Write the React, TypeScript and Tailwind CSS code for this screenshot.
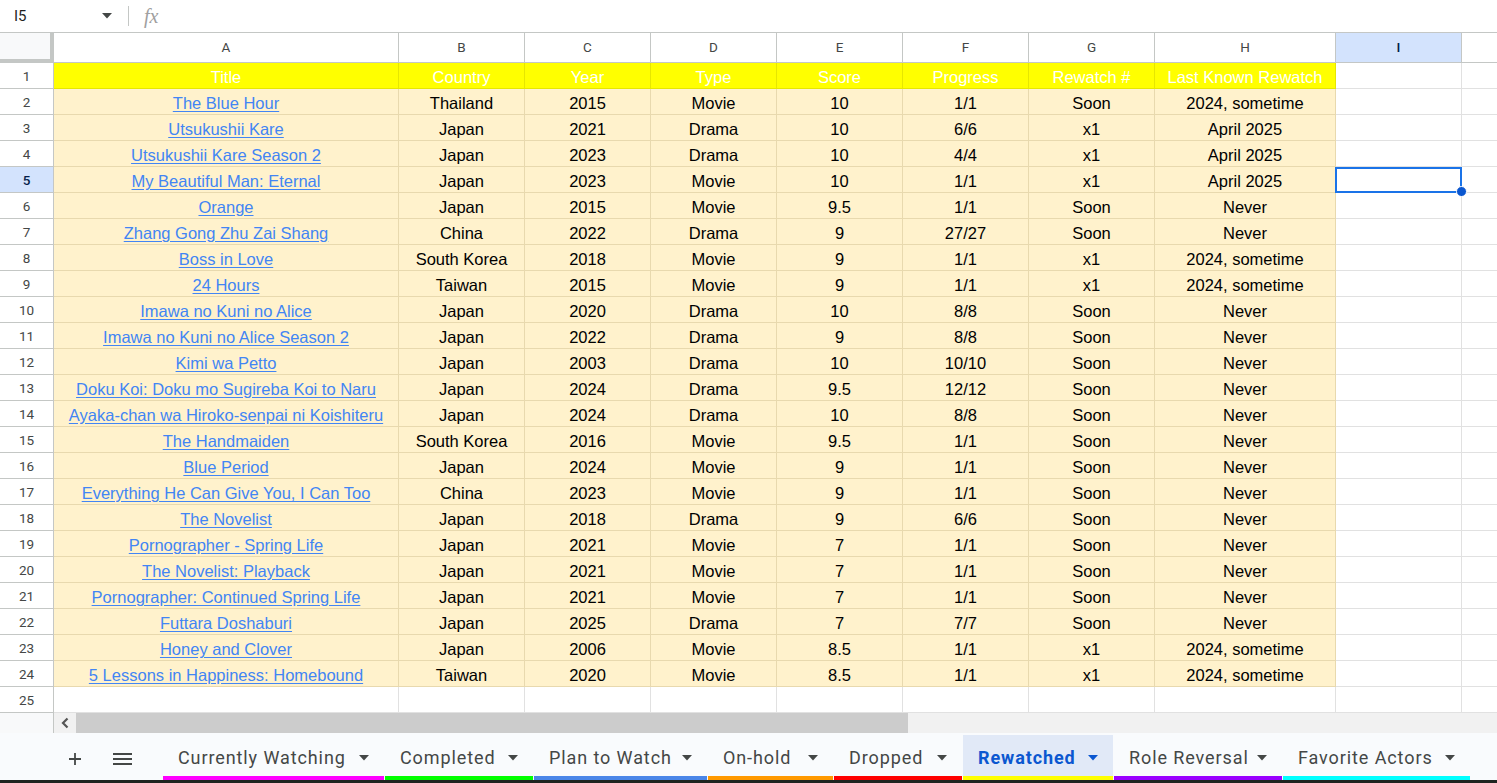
import React from "react";

type Row = [string, string, string, string, string, string, string, string];

const rows: Row[] = [
  ["The Blue Hour", "Thailand", "2015", "Movie", "10", "1/1", "Soon", "2024, sometime"],
  ["Utsukushii Kare", "Japan", "2021", "Drama", "10", "6/6", "x1", "April 2025"],
  ["Utsukushii Kare Season 2", "Japan", "2023", "Drama", "10", "4/4", "x1", "April 2025"],
  ["My Beautiful Man: Eternal", "Japan", "2023", "Movie", "10", "1/1", "x1", "April 2025"],
  ["Orange", "Japan", "2015", "Movie", "9.5", "1/1", "Soon", "Never"],
  ["Zhang Gong Zhu Zai Shang", "China", "2022", "Drama", "9", "27/27", "Soon", "Never"],
  ["Boss in Love", "South Korea", "2018", "Movie", "9", "1/1", "x1", "2024, sometime"],
  ["24 Hours", "Taiwan", "2015", "Movie", "9", "1/1", "x1", "2024, sometime"],
  ["Imawa no Kuni no Alice", "Japan", "2020", "Drama", "10", "8/8", "Soon", "Never"],
  ["Imawa no Kuni no Alice Season 2", "Japan", "2022", "Drama", "9", "8/8", "Soon", "Never"],
  ["Kimi wa Petto", "Japan", "2003", "Drama", "10", "10/10", "Soon", "Never"],
  ["Doku Koi: Doku mo Sugireba Koi to Naru", "Japan", "2024", "Drama", "9.5", "12/12", "Soon", "Never"],
  ["Ayaka-chan wa Hiroko-senpai ni Koishiteru", "Japan", "2024", "Drama", "10", "8/8", "Soon", "Never"],
  ["The Handmaiden", "South Korea", "2016", "Movie", "9.5", "1/1", "Soon", "Never"],
  ["Blue Period", "Japan", "2024", "Movie", "9", "1/1", "Soon", "Never"],
  ["Everything He Can Give You, I Can Too", "China", "2023", "Movie", "9", "1/1", "Soon", "Never"],
  ["The Novelist", "Japan", "2018", "Drama", "9", "6/6", "Soon", "Never"],
  ["Pornographer - Spring Life", "Japan", "2021", "Movie", "7", "1/1", "Soon", "Never"],
  ["The Novelist: Playback", "Japan", "2021", "Movie", "7", "1/1", "Soon", "Never"],
  ["Pornographer: Continued Spring Life", "Japan", "2021", "Movie", "7", "1/1", "Soon", "Never"],
  ["Futtara Doshaburi", "Japan", "2025", "Drama", "7", "7/7", "Soon", "Never"],
  ["Honey and Clover", "Japan", "2006", "Movie", "8.5", "1/1", "x1", "2024, sometime"],
  ["5 Lessons in Happiness: Homebound", "Taiwan", "2020", "Movie", "8.5", "1/1", "x1", "2024, sometime"],
];

const headers = ["Title", "Country", "Year", "Type", "Score", "Progress", "Rewatch #", "Last Known Rewatch"];
const letters = ["A", "B", "C", "D", "E", "F", "G", "H"];
const widths = ["w-[345px]", "w-[126px]", "w-[126px]", "w-[126px]", "w-[126px]", "w-[126px]", "w-[126px]", "w-[181px]"];

const tabs = [
  { name: "Currently Watching", w: "w-[221px]", bar: "bg-[#ff00ff]" },
  { name: "Completed", w: "w-[148px]", bar: "bg-[#00ff00]" },
  { name: "Plan to Watch", w: "w-[173px]", bar: "bg-[#4a86e8]" },
  { name: "On-hold", w: "w-[125px]", bar: "bg-[#ff9900]" },
  { name: "Dropped", w: "w-[128px]", bar: "bg-[#ff0000]" },
  { name: "Rewatched", w: "w-[150px]", bar: "bg-[#ffff00]", active: true },
  { name: "Role Reversal", w: "w-[168px]", bar: "bg-[#9900ff]" },
  { name: "Favorite Actors", w: "w-[187px]", bar: "bg-[#00ffff]" },
];

const Caret = ({ cls }: { cls: string }) => (
  <svg width="10" height="6" viewBox="0 0 10 6" className={cls}>
    <path d="M0 0h10L5 5.5z" fill="currentColor" />
  </svg>
);

const cellFont = { fontFamily: '"Liberation Sans", Arial, sans-serif' };

export default function App() {
  return (
    <div className="h-[783px] w-full overflow-hidden flex flex-col bg-white" style={{ fontFamily: "Roboto, sans-serif" }}>
      {/* formula bar */}
      <div className="h-[33px] shrink-0 flex items-center border-b border-[#c4c7c5]">
        <div className="w-[128px] flex items-center pl-[14px] pr-[16px] text-[15px] text-[#1f1f1f]">
          <span>I5</span>
          <Caret cls="ml-auto text-[#444746]" />
        </div>
        <div className="w-px h-[20px] bg-[#c4c7c5]" />
        <span className="ml-[15px] text-[20px] italic text-[#a0a0a0]" style={{ fontFamily: '"Liberation Serif", serif' }}>
          fx
        </span>
      </div>

      {/* grid */}
      <div className="flex-1 flex flex-col overflow-hidden">
        {/* column letters */}
        <div className="h-[30px] flex shrink-0 text-[13.5px] text-[#444746]">
          <div className="w-[54px] bg-[#f8f9fa] border-r-4 border-b-4 border-[#c4c7c5]" />
          {letters.map((l, i) => (
            <div key={l} className={`${widths[i]} flex items-center justify-center border-r border-b border-[#c4c7c5]`}>
              {l}
            </div>
          ))}
          <div className="w-[126px] flex items-center justify-center border-r border-b border-[#c4c7c5] bg-[#d3e3fd] text-[#041e49] font-medium">
            I
          </div>
          <div className="flex-1 border-b border-[#c4c7c5]" />
        </div>

        {/* header row */}
        <div className="h-[26px] flex shrink-0" style={cellFont}>
          <div className="w-[54px] flex items-center justify-center pt-[2px] border-r border-b border-[#c4c7c5] text-[13.5px] text-[#444746]" style={{ fontFamily: "Roboto, sans-serif" }}>
            1
          </div>
          {headers.map((h, i) => (
            <div key={h} className={`${widths[i]} flex items-center justify-center pt-[4px] bg-[#ffff00] border-r border-b border-[#e6e600] text-white text-[16.5px]`}>
              {h}
            </div>
          ))}
          <div className="w-[126px] border-r border-b border-[#e1e1e1]" />
          <div className="flex-1 border-b border-[#e1e1e1]" />
        </div>

        {rows.map((r, ri) => {
          const n = ri + 2;
          const sel = n === 5;
          return (
            <div key={n} className="h-[26px] flex shrink-0" style={cellFont}>
              <div
                className={`w-[54px] flex items-center justify-center pt-[2px] border-r border-b border-[#c4c7c5] text-[13.5px] ${
                  sel ? "bg-[#d3e3fd] text-[#041e49] font-medium" : "text-[#444746]"
                }`}
                style={{ fontFamily: "Roboto, sans-serif" }}
              >
                {n}
              </div>
              {r.map((v, ci) => (
                <div
                  key={ci}
                  className={`${widths[ci]} flex items-center justify-center pt-[4px] bg-[#fff2cc] border-r border-b border-[#e8d9ae] text-[16.5px] whitespace-nowrap overflow-hidden ${
                    ci === 0 ? "text-[#4285f4] underline underline-offset-2" : "text-black"
                  }`}
                >
                  {v}
                </div>
              ))}
              <div className="w-[126px] relative border-r border-b border-[#e1e1e1]">
                {sel && (
                  <>
                    <div className="absolute -left-px top-0 w-[127px] h-[26px] border-2 border-[#1a73e8]" />
                    <div className="absolute -right-[6px] -bottom-[5px] w-[11px] h-[11px] rounded-full bg-[#0b57d0] border border-white z-10" />
                  </>
                )}
              </div>
              <div className="flex-1 border-b border-[#e1e1e1]" />
            </div>
          );
        })}

        {/* row 25 */}
        <div className="h-[26px] flex shrink-0">
          <div className="w-[54px] flex items-center justify-center pt-[2px] border-r border-b border-[#c4c7c5] text-[13.5px] text-[#444746]">
            25
          </div>
          {widths.map((w, i) => (
            <div key={i} className={`${w} border-r border-b border-[#e1e1e1]`} />
          ))}
          <div className="w-[126px] border-r border-b border-[#e1e1e1]" />
          <div className="flex-1 border-b border-[#e1e1e1]" />
        </div>
      </div>

      {/* horizontal scrollbar */}
      <div className="h-[20px] flex shrink-0 bg-[#f1f1f1]">
        <div className="w-[54px] bg-[#f8f9fa] border-r border-[#c4c7c5]" />
        <div className="w-[22px] flex items-center justify-center text-[#555]">
          <svg width="8" height="12" viewBox="0 0 8 12">
            <path d="M6.5 1.5L2 6l4.5 4.5" fill="none" stroke="currentColor" strokeWidth="2.2" />
          </svg>
        </div>
        <div className="w-[832px] bg-[#cccccc]" />
      </div>

      {/* sheet tabs */}
      <div className="h-[47px] flex shrink-0 bg-[#f9fbfd] text-[#444746]">
        <div className="w-[97px] flex items-center justify-end pr-[15px] pt-[4px]">
          <svg width="14" height="14" viewBox="0 0 14 14">
            <path d="M7 1v12M1 7h12" stroke="currentColor" strokeWidth="1.8" />
          </svg>
        </div>
        <div className="w-[66px] flex items-center pl-[16px] pt-[4px]">
          <svg width="19" height="14" viewBox="0 0 19 14">
            <path d="M0 2h19M0 7h19M0 12h19" stroke="currentColor" strokeWidth="1.8" />
          </svg>
        </div>
        {tabs.map((t) => (
          <div key={t.name} className={`${t.w} mr-[1px] flex flex-col`}>
            <div
              className={`flex-1 mt-[2px] pt-[4px] flex items-center pl-[15px] pr-[15px] text-[18px] tracking-[0.05em] ${
                t.active ? "bg-[#e1e9f7] text-[#0b57d0] font-bold tracking-[0.03em]" : "font-normal"
              }`}
            >
              <span className="whitespace-nowrap">{t.name}</span>
              <Caret cls="ml-auto" />
            </div>
            <div className={`h-[4px] ${t.bar}`} />
          </div>
        ))}
      </div>
      <div className="h-[3px] shrink-0 bg-[#1e2420]" />
    </div>
  );
}
